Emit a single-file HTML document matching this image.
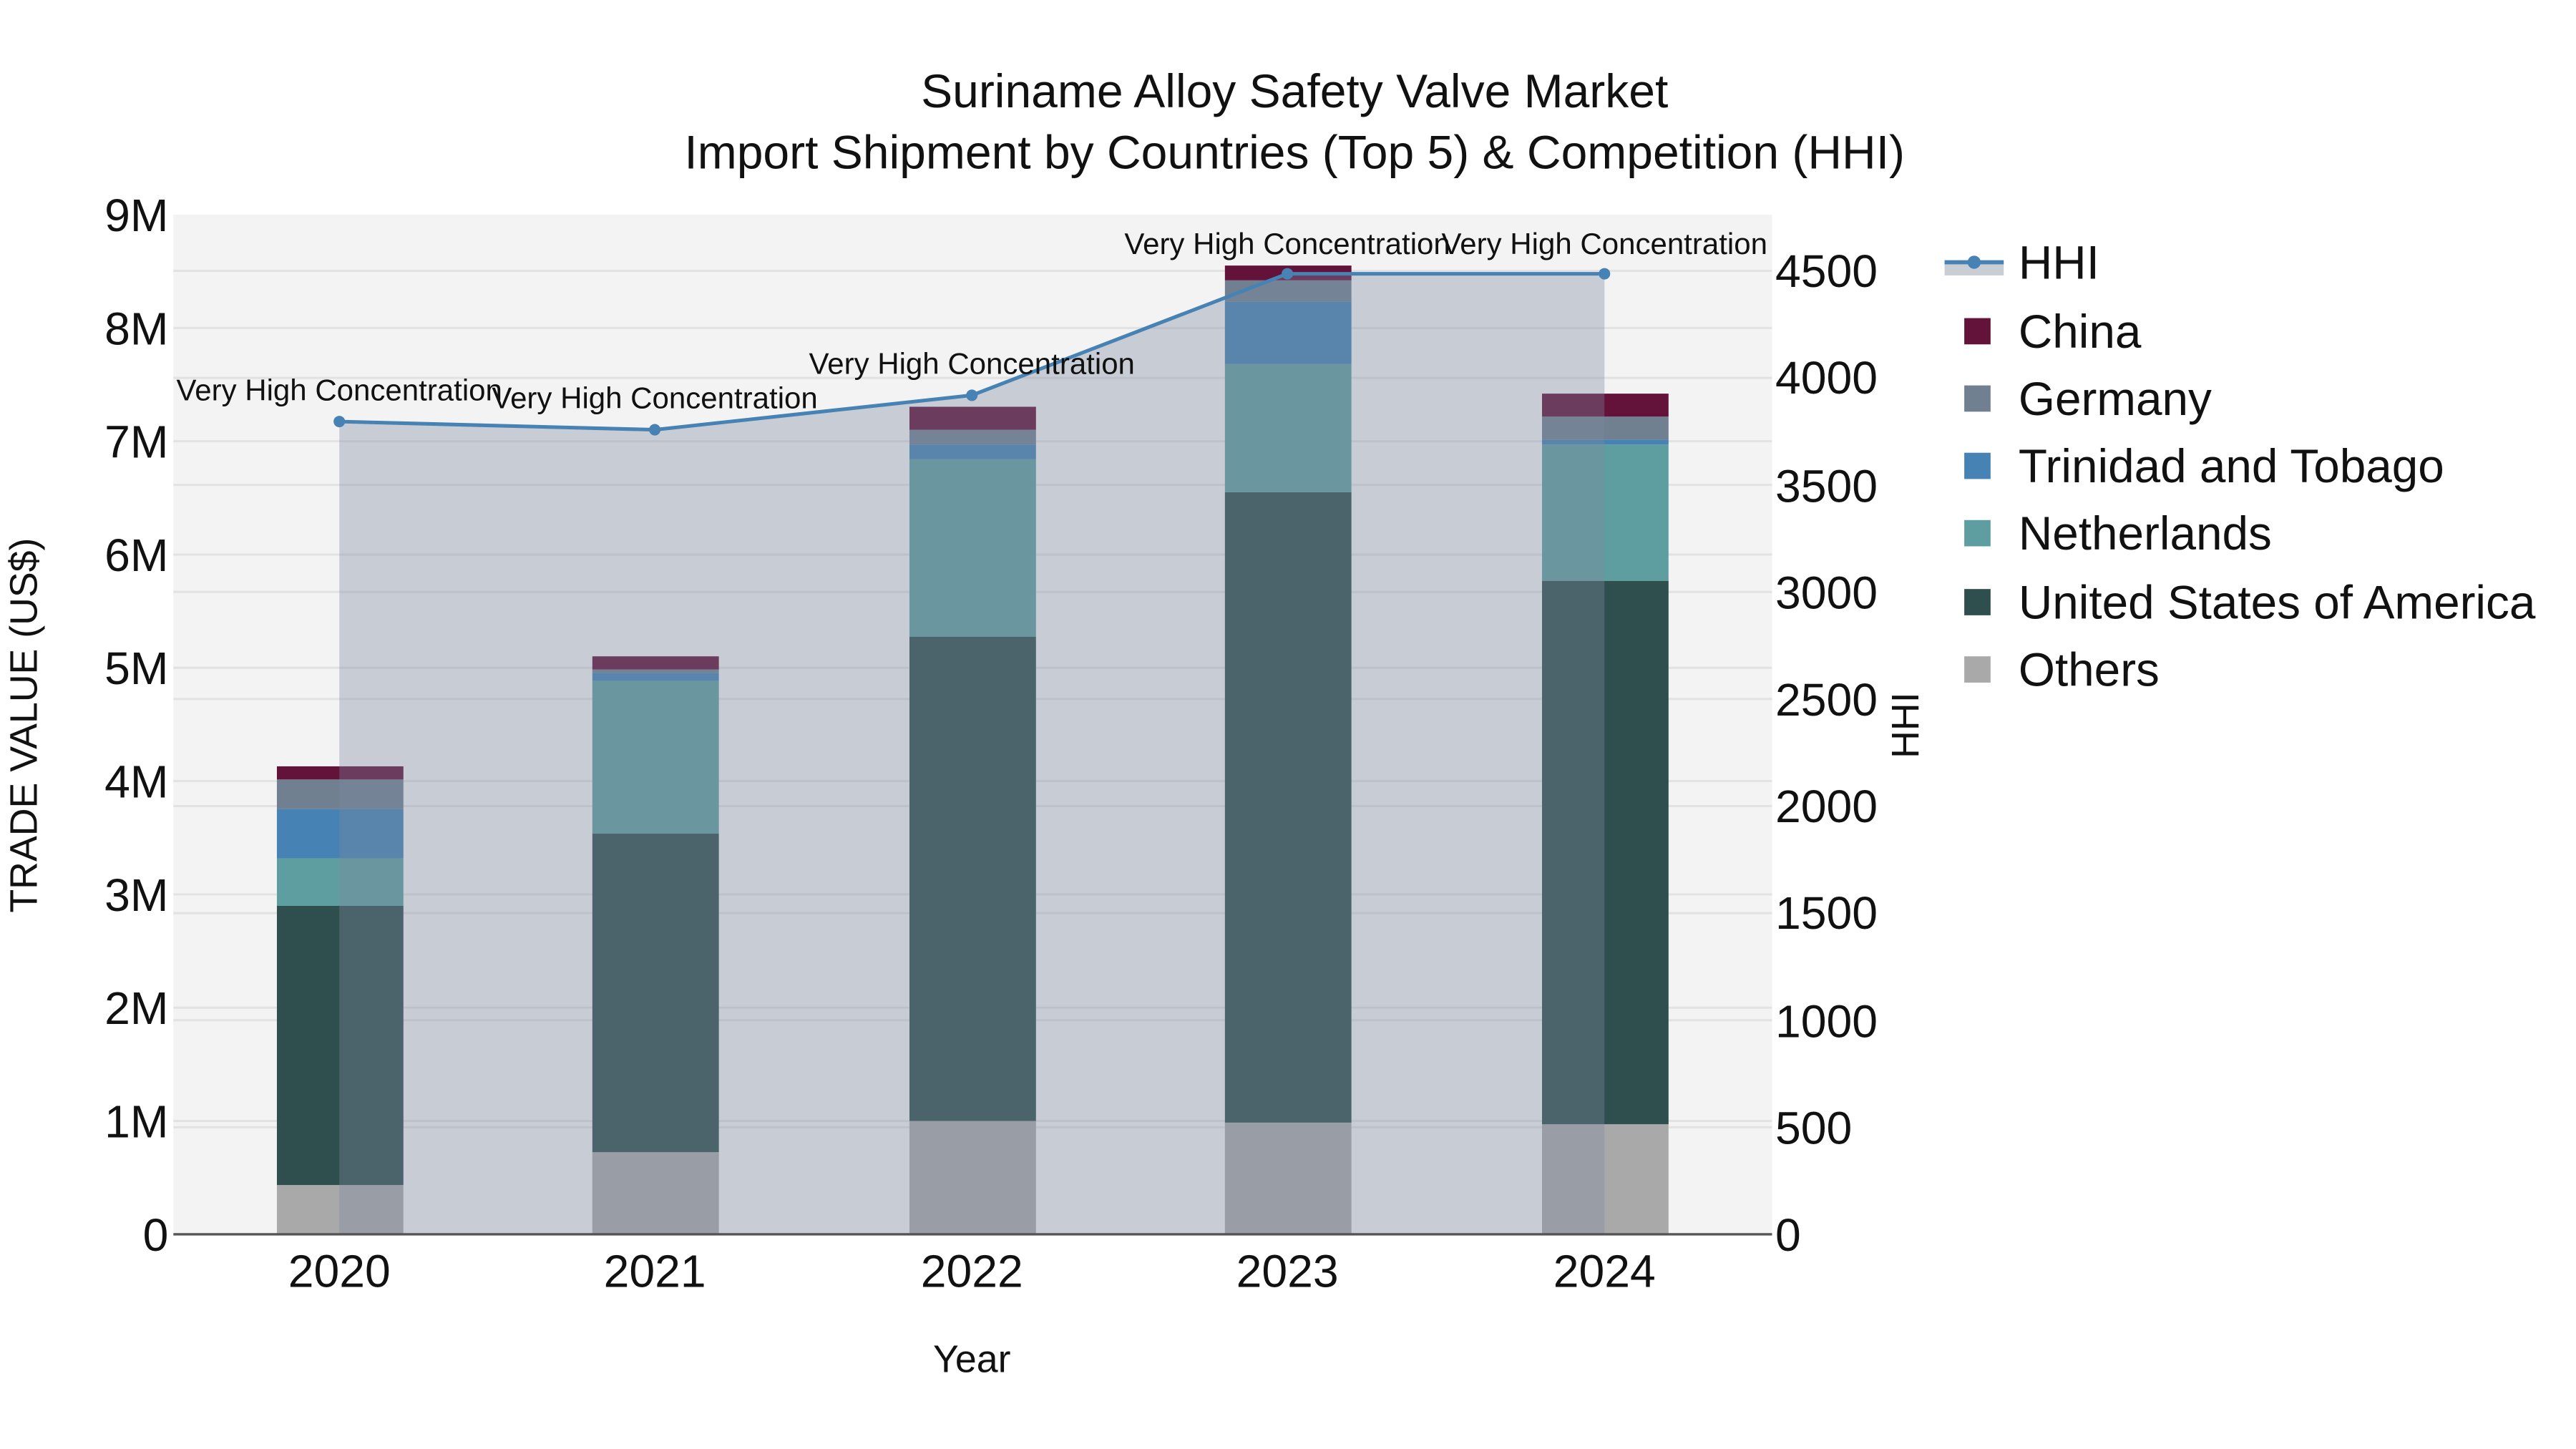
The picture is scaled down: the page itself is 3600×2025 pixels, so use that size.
<!DOCTYPE html>
<html><head><meta charset="utf-8"><style>
html,body{margin:0;padding:0;background:#fff;}
svg{display:block;}
text{font-family:"Liberation Sans",sans-serif;fill:#111;}
</style></head><body>
<svg width="3600" height="2025" viewBox="0 0 1560 877.5" xmlns="http://www.w3.org/2000/svg">
<text x="784" y="65" font-size="28.6" text-anchor="middle">Suriname Alloy Safety Valve Market</text>
<text x="784" y="102" font-size="28.6" text-anchor="middle">Import Shipment by Countries (Top 5) &amp; Competition (HHI)</text>
<g transform="translate(105,130) scale(0.995,0.9943) translate(-105,-130)">
<rect x="105" y="130" width="973" height="621" fill="#f3f3f3"/>
<g stroke="#e2e2e2" stroke-width="1.3">
<line x1="105" x2="1078" y1="682" y2="682"/><line x1="105" x2="1078" y1="613" y2="613"/><line x1="105" x2="1078" y1="544" y2="544"/><line x1="105" x2="1078" y1="475" y2="475"/><line x1="105" x2="1078" y1="406" y2="406"/><line x1="105" x2="1078" y1="337" y2="337"/><line x1="105" x2="1078" y1="268" y2="268"/><line x1="105" x2="1078" y1="199" y2="199"/>
<line x1="105" x2="1078" y1="685.8" y2="685.8"/><line x1="105" x2="1078" y1="620.6" y2="620.6"/><line x1="105" x2="1078" y1="555.4" y2="555.4"/><line x1="105" x2="1078" y1="490.2" y2="490.2"/><line x1="105" x2="1078" y1="425" y2="425"/><line x1="105" x2="1078" y1="359.8" y2="359.8"/><line x1="105" x2="1078" y1="294.6" y2="294.6"/><line x1="105" x2="1078" y1="229.4" y2="229.4"/><line x1="105" x2="1078" y1="164.2" y2="164.2"/>
</g>
<g>
<rect x="168" y="721" width="77" height="30" fill="#a9a9a9"/><rect x="168" y="551" width="77" height="170" fill="#2f4f4f"/><rect x="168" y="522" width="77" height="29" fill="#5f9ea0"/><rect x="168" y="492" width="77" height="30" fill="#4682b4"/><rect x="168" y="474" width="77" height="18" fill="#708090"/><rect x="168" y="466" width="77" height="8" fill="#63123a"/>
<rect x="360" y="701" width="77" height="50" fill="#a9a9a9"/><rect x="360" y="507" width="77" height="194" fill="#2f4f4f"/><rect x="360" y="414" width="77" height="93" fill="#5f9ea0"/><rect x="360" y="409" width="77" height="5" fill="#4682b4"/><rect x="360" y="407" width="77" height="2" fill="#708090"/><rect x="360" y="399" width="77" height="8" fill="#63123a"/>
<rect x="553" y="682" width="77" height="69" fill="#a9a9a9"/><rect x="553" y="387" width="77" height="295" fill="#2f4f4f"/><rect x="553" y="279" width="77" height="108" fill="#5f9ea0"/><rect x="553" y="270" width="77" height="9" fill="#4682b4"/><rect x="553" y="261" width="77" height="9" fill="#708090"/><rect x="553" y="247" width="77" height="14" fill="#63123a"/>
<rect x="745" y="683" width="77" height="68" fill="#a9a9a9"/><rect x="745" y="299" width="77" height="384" fill="#2f4f4f"/><rect x="745" y="221" width="77" height="78" fill="#5f9ea0"/><rect x="745" y="183" width="77" height="38" fill="#4682b4"/><rect x="745" y="170" width="77" height="13" fill="#708090"/><rect x="745" y="161" width="77" height="9" fill="#63123a"/>
<rect x="938" y="684" width="77" height="67" fill="#a9a9a9"/><rect x="938" y="353" width="77" height="331" fill="#2f4f4f"/><rect x="938" y="270" width="77" height="83" fill="#5f9ea0"/><rect x="938" y="267" width="77" height="3" fill="#4682b4"/><rect x="938" y="253" width="77" height="14" fill="#708090"/><rect x="938" y="239" width="77" height="14" fill="#63123a"/>
</g>
<polygon points="206,256 398,261 591,240 783,166 976,166 976,751 206,751" fill="rgb(124,135,158)" fill-opacity="0.36"/>
<line x1="105" x2="1078" y1="751" y2="751" stroke="#555" stroke-width="1.5"/>
<polyline points="206,256 398,261 591,240 783,166 976,166" fill="none" stroke="#4682b4" stroke-width="2.2"/>
<g fill="#4682b4"><circle cx="206" cy="256" r="3.5"/><circle cx="398" cy="261" r="3.5"/><circle cx="591" cy="240" r="3.5"/><circle cx="783" cy="166" r="3.5"/><circle cx="976" cy="166" r="3.5"/></g>
<g font-size="18.3" text-anchor="middle">
<text x="206" y="243">Very High Concentration</text>
<text x="398" y="248">Very High Concentration</text>
<text x="591" y="227">Very High Concentration</text>
<text x="783" y="154">Very High Concentration</text>
<text x="976" y="154">Very High Concentration</text>
</g>
<g font-size="28" text-anchor="end">
<text x="102" y="761">0</text><text x="102" y="692">1M</text><text x="102" y="623">2M</text><text x="102" y="554">3M</text><text x="102" y="485">4M</text><text x="102" y="416">5M</text><text x="102" y="347">6M</text><text x="102" y="278">7M</text><text x="102" y="209">8M</text><text x="102" y="140">9M</text>
</g>
<g font-size="28">
<text x="1080" y="761">0</text><text x="1080" y="696">500</text><text x="1080" y="631">1000</text><text x="1080" y="565">1500</text><text x="1080" y="500">2000</text><text x="1080" y="435">2500</text><text x="1080" y="370">3000</text><text x="1080" y="305">3500</text><text x="1080" y="239">4000</text><text x="1080" y="174">4500</text>
</g>
<g font-size="28" text-anchor="middle">
<text x="206" y="783">2020</text><text x="398" y="783">2021</text><text x="591" y="783">2022</text><text x="783" y="783">2023</text><text x="976" y="783">2024</text>
</g>
<text x="591" y="835" font-size="23.4" text-anchor="middle">Year</text>
<text transform="translate(22,441) rotate(-90)" font-size="23.4" text-anchor="middle">TRADE VALUE (US$)</text>
<text transform="translate(1167,441) rotate(-90)" font-size="23.4" text-anchor="middle">HHI</text>
<rect x="1183" y="159" width="36" height="8" fill="#c9cdd4"/>
<line x1="1183" x2="1219" y1="159" y2="159" stroke="#4682b4" stroke-width="2.5"/>
<circle cx="1201" cy="159" r="4" fill="#4682b4"/>
<rect x="1195" y="193" width="16" height="16" fill="#63123a"/>
<rect x="1195" y="234" width="16" height="16" fill="#708090"/>
<rect x="1195" y="275" width="16" height="16" fill="#4682b4"/>
<rect x="1195" y="316" width="16" height="16" fill="#5f9ea0"/>
<rect x="1195" y="358" width="16" height="16" fill="#2f4f4f"/>
<rect x="1195" y="399" width="16" height="16" fill="#a9a9a9"/>
<g font-size="28.6">
<text x="1228" y="169">HHI</text>
<text x="1228" y="211">China</text>
<text x="1228" y="252">Germany</text>
<text x="1228" y="293">Trinidad and Tobago</text>
<text x="1228" y="334">Netherlands</text>
<text x="1228" y="376">United States of America</text>
<text x="1228" y="417">Others</text>
</g>
</g>
</svg>
</body></html>
